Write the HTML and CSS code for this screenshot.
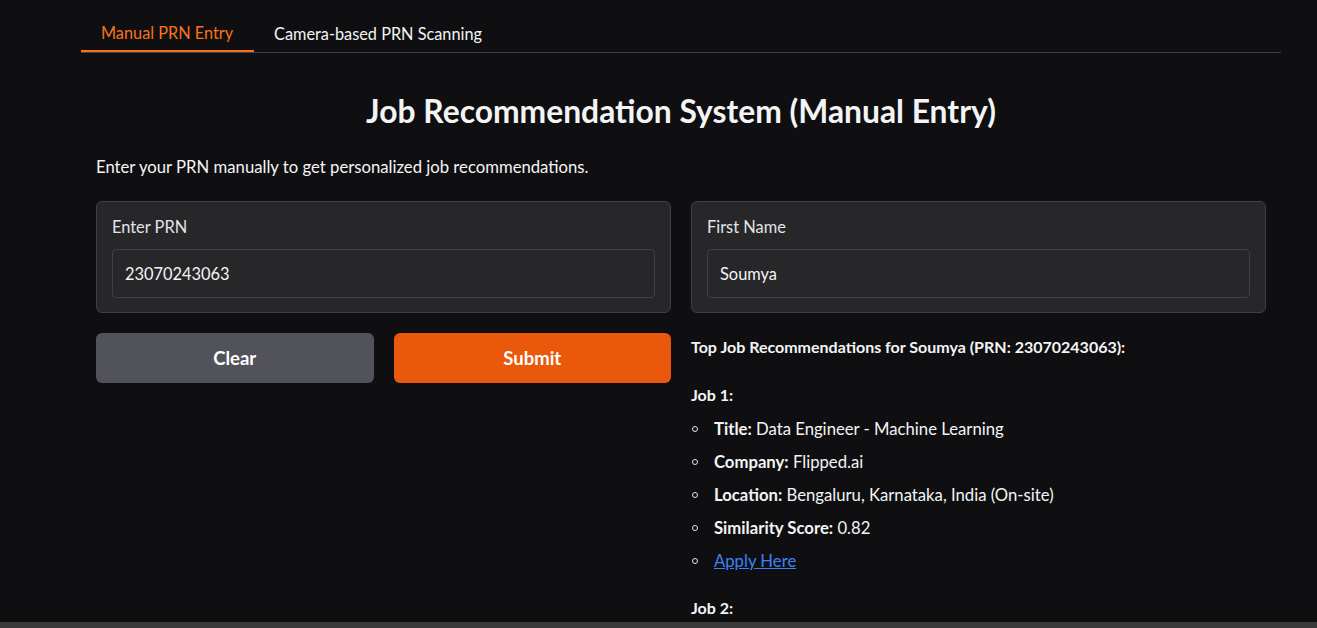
FILE: index.html
```html
<!DOCTYPE html>
<html>
<head>
<meta charset="utf-8">
<link rel="stylesheet" href="styles.css">
</head>
<body>
<div class="app">
  <div class="tabs">
    <div class="tab-nav">
      <button class="tab active">Manual PRN Entry</button>
      <button class="tab">Camera-based PRN Scanning</button>
    </div>
    <div class="tab-panel">
      <h1 class="title">Job Recommendation System (Manual Entry)</h1>
      <p class="desc">Enter your PRN manually to get personalized job recommendations.</p>
      <div class="row">
        <div class="col">
          <div class="block">
            <label class="label">Enter PRN</label>
            <div class="input">23070243063</div>
          </div>
          <div class="btn-row">
            <button class="btn secondary">Clear</button>
            <button class="btn primary">Submit</button>
          </div>
        </div>
        <div class="col">
          <div class="block">
            <label class="label">First Name</label>
            <div class="input">Soumya</div>
          </div>
          <div class="output">
            <p class="strong">Top Job Recommendations for Soumya (PRN: 23070243063):</p>
            <p class="strong">Job 1:</p>
            <ul class="list">
              <li><b>Title:</b> Data Engineer - Machine Learning</li>
              <li><b>Company:</b> Flipped.ai</li>
              <li><b>Location:</b> Bengaluru, Karnataka, India (On-site)</li>
              <li><b>Similarity Score:</b> 0.82</li>
              <li><a href="#" class="link">Apply Here</a></li>
            </ul>
            <p class="strong">Job 2:</p>
          </div>
        </div>
      </div>
    </div>
  </div>
</div>
<div class="hscroll"></div>
</body>
</html>
```
FILE: styles.css
```css
html, body {
  margin: 0;
  padding: 0;
  background: #0f0f11;
  color: #f4f4f5;
  font-family: "Lato", "Noto Sans", sans-serif;
  overflow: hidden;
  height: 628px;
}
.app {
  width: 1200px;
  padding-left: 81px;
  padding-top: 16px;
}
.tab-nav {
  display: flex;
  border-bottom: 1px solid #3f3f46;
  height: 36px;
}
.tab {
  background: none;
  border: none;
  color: #f4f4f5;
  font-family: inherit;
  font-size: 16.3px;
  padding: 0 20px 2px 20px;
  height: 36px;
  margin-bottom: -1px;
  cursor: pointer;
}
.tab.active {
  color: #f97316;
  border-bottom: 2px solid #f97316;
  padding-right: 21px;
}
.tab-panel {
  padding: 0 15px;
}
.title {
  text-align: center;
  font-size: 31.8px;
  font-weight: 700;
  margin: 40px 0 0;
  line-height: 36px;
}
.desc {
  font-size: 16.7px;
  margin: 26px 0 0;
  line-height: 24px;
}
.row {
  display: flex;
  gap: 20px;
  margin-top: 22px;
}
.col {
  flex: 1;
  display: flex;
  flex-direction: column;
  gap: 20px;
}
.block {
  background: #27272a;
  border: 1px solid #3f3f46;
  border-radius: 6px;
  padding: 15px 15px 14px;
}
.label {
  display: block;
  font-size: 16.4px;
  color: #e4e4e7;
  line-height: 20px;
  margin-bottom: 12px;
}
.input {
  border: 1px solid #3f3f46;
  border-radius: 4px;
  height: 47px;
  padding: 0 12px;
  display: flex;
  align-items: center;
  font-size: 16.4px;
  color: #f4f4f5;
  background: #27272a;
}
.btn-row {
  display: flex;
  gap: 20px;
}
.btn {
  flex: 1;
  height: 50px;
  border: none;
  border-radius: 6px;
  color: #fff;
  font-family: inherit;
  font-size: 18.5px;
  font-weight: 700;
}
.btn.secondary { background: #52525b; }
.btn.primary { background: #ea580c; }
.output {
  font-size: 16.7px;
  line-height: 24px;
}
.output b {
  font-weight: 700;
}
.strong {
  font-size: 16px;
  font-weight: 700;
  margin: 2px 0 24px;
}
.list {
  list-style: none;
  margin: -14px 0 23px;
  padding-left: 1px;
}
.list li {
  display: flex;
  align-items: center;
  margin: 0 0 9px;
  white-space: pre;
}
.list li::before {
  content: "";
  width: 4px;
  height: 4px;
  border: 1.5px solid #e4e4e7;
  border-radius: 50%;
  margin-right: 16px;
  flex: none;
}
.link { color: #3b82f6; }
.hscroll {
  position: fixed;
  left: 0;
  right: 0;
  bottom: 0;
  height: 6px;
  background: #3a3a3a;
}
```
